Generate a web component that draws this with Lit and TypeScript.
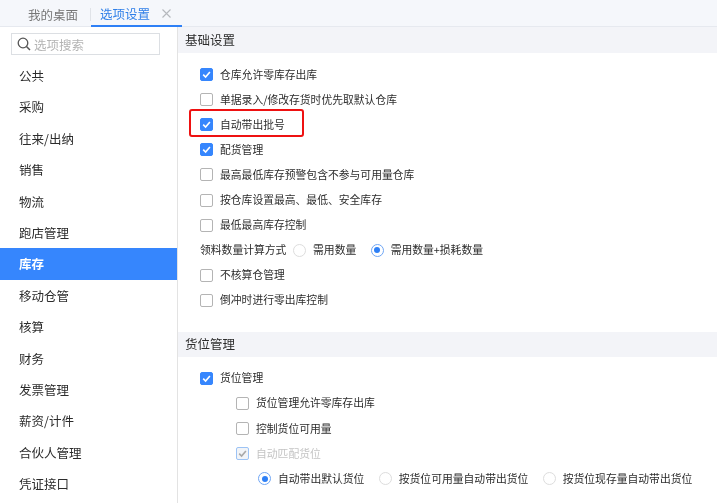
import { LitElement, html, css } from "lit";
import { customElement } from "lit/decorators.js";

const MENU = ["公共","采购","往来/出纳","销售","物流","跑店管理","库存","移动仓管","核算","财务","发票管理","薪资/计件","合伙人管理","凭证接口"];

type Row = { k: "c"; t: string; on?: boolean; sub?: boolean; dis?: boolean; mark?: boolean } | { k: "r"; label?: string; sub?: boolean; opts: { t: string; on?: boolean }[] };

const BASIC: Row[] = [
  { k: "c", t: "仓库允许零库存出库", on: true },
  { k: "c", t: "单据录入/修改存货时优先取默认仓库" },
  { k: "c", t: "自动带出批号", on: true, mark: true },
  { k: "c", t: "配货管理", on: true },
  { k: "c", t: "最高最低库存预警包含不参与可用量仓库" },
  { k: "c", t: "按仓库设置最高、最低、安全库存" },
  { k: "c", t: "最低最高库存控制" },
  { k: "r", label: "领料数量计算方式", opts: [{ t: "需用数量" }, { t: "需用数量+损耗数量", on: true }] },
  { k: "c", t: "不核算仓管理" },
  { k: "c", t: "倒冲时进行零出库控制" },
];
const LOC: Row[] = [
  { k: "c", t: "货位管理", on: true },
  { k: "c", t: "货位管理允许零库存出库", sub: true },
  { k: "c", t: "控制货位可用量", sub: true },
  { k: "c", t: "自动匹配货位", on: true, sub: true, dis: true },
  { k: "r", sub: true, opts: [{ t: "自动带出默认货位", on: true }, { t: "按货位可用量自动带出货位" }, { t: "按货位现存量自动带出货位" }] },
];

@customElement("app-root")
export class AppRoot extends LitElement {
  static styles = css`
    :host { display: block; width: 717px; height: 503px; overflow: hidden; background: #fff; color: #2c2c2c;
      font-family: "Noto Sans CJK SC", "Liberation Sans", sans-serif; font-size: 10.8px; filter: blur(0.3px); }
    .tabs { height: 27px; box-sizing: border-box; background: #f5f7fb; border-bottom: 1px solid #e6e9ef; display: flex; align-items: flex-start; font-size: 12.5px; }
    .tab { display: flex; align-items: center; box-sizing: border-box; height: 26.5px; padding-top: 2px; }
    .home { margin-left: 28px; width: 62px; color: #777; position: relative; }
    .home::after { content: ""; position: absolute; right: -1px; top: 8px; height: 13px; width: 1px; background: #e0e3e8; }
    .cur { margin-left: 1px; width: 91px; padding-left: 9px; color: #2f7fe8; border-bottom: 2px solid #2e80f6; gap: 12px; }
    .cur svg { display: block; }
    .main { display: flex; height: 476px; }
    .side { width: 177px; flex: none; border-right: 1px solid #e3e3e3; background: #fff; }
    .search { margin: 6px 0 0 11px; width: 149px; height: 22px; box-sizing: border-box; border: 1px solid #dcdfe3; display: flex; align-items: center; gap: 3px; padding-left: 5px; color: #b4b4b4; font-size: 12.5px; }
    .search svg { display: block; flex: none; }
    .menu { margin-top: 5px; }
    .item { height: 31.4px; line-height: 31.4px; padding-left: 19px; font-size: 12.5px; color: #2c2c2c; }
    .item.on { background: #3686fd; color: #fff; font-weight: 700; }
    .content { flex: 1; min-width: 0; }
    .hd { height: 25.5px; line-height: 25px; background: #f3f4f8; padding-left: 7px; font-size: 12.5px; color: #2c2c2c; }
    .hd.second { line-height: 23.5px; }
    .list { padding: 9.5px 0 0 22px; display: flex; flex-direction: column; }
    .list.l1 { height: 279px; box-sizing: border-box; }
    .list.l2 { padding-top: 8.85px; }
    .row { height: 25.1px; display: flex; align-items: center; position: relative; flex: none; }
    .row.sub { padding-left: 36px; }
    .row.rsub { padding-left: 58px; }
    .t { margin-top: -2px; }
    .box { width: 13px; height: 13px; box-sizing: border-box; border: 1px solid #b4b4b4; border-radius: 2px; margin-right: 7px; flex: none; display: flex; align-items: center; justify-content: center; background: #fff; }
    .box.on { background: #3686fd; border-color: #3686fd; }
    .box.dis { background: #f2f4f7; border-color: #9cc3f5; }
    .box svg { display: block; }
    .dim { color: #c4c4c4; }
    .lbl { margin-right: 6.7px; }
    .radio { width: 13px; height: 13px; box-sizing: border-box; border: 1px solid #ddd; border-radius: 50%; margin-right: 7px; flex: none; display: flex; align-items: center; justify-content: center; background: #fff; }
    .radio.on { border-color: #6fa6f5; }
    .radio.on::after { content: ""; width: 6px; height: 6px; border-radius: 50%; background: #2e80f6; }
    .opt { display: flex; align-items: center; margin-right: 14.4px; }
    .mark { position: absolute; left: -11px; top: -3px; width: 115px; height: 28px; box-sizing: border-box; border: 2.5px solid #ee1111; border-radius: 3px; }
  `;

  private row(r: Row) {
    if (r.k === "r") {
      return html`<div class="row ${r.sub ? "rsub" : ""}">
        ${r.label ? html`<span class="lbl t">${r.label}</span>` : ""}
        ${r.opts.map(o => html`<span class="opt"><span class="radio ${o.on ? "on" : ""}"></span><span class="t">${o.t}</span></span>`)}
      </div>`;
    }
    return html`<div class="row ${r.sub ? "sub" : ""}">
      <span class="box ${r.on && !r.dis ? "on" : ""} ${r.dis ? "dis" : ""}">
        ${r.on ? html`<svg width="9" height="9" viewBox="0 0 9 9"><path d="M1.2 4.6 L3.6 7 L7.9 2" fill="none" stroke="${r.dis ? "#a8a8a8" : "#fff"}" stroke-width="1.6"/></svg>` : ""}
      </span>
      <span class="t ${r.dis ? "dim" : ""}">${r.t}</span>
      ${r.mark ? html`<span class="mark"></span>` : ""}
    </div>`;
  }

  render() {
    return html`
      <div class="tabs">
        <div class="tab home">我的桌面</div>
        <div class="tab cur">选项设置
          <svg width="9" height="9" viewBox="0 0 9 9"><path d="M0.5 0.5 L8.5 8.5 M8.5 0.5 L0.5 8.5" stroke="#b5b8bd" stroke-width="1.1" fill="none"/></svg>
        </div>
      </div>
      <div class="main">
        <div class="side">
          <div class="search">
            <svg width="14" height="14" viewBox="0 0 14 14"><circle cx="6" cy="6" r="4.8" fill="none" stroke="#555" stroke-width="1.3"/><path d="M9.5 9.5 L13 13" stroke="#555" stroke-width="1.5"/></svg>
            选项搜索
          </div>
          <div class="menu">${MENU.map(m => html`<div class="item ${m === "库存" ? "on" : ""}">${m}</div>`)}</div>
        </div>
        <div class="content">
          <div class="hd">基础设置</div>
          <div class="list l1">${BASIC.map(r => this.row(r))}</div>
          <div class="hd second">货位管理</div>
          <div class="list l2">${LOC.map(r => this.row(r))}</div>
        </div>
      </div>
    `;
  }
}
